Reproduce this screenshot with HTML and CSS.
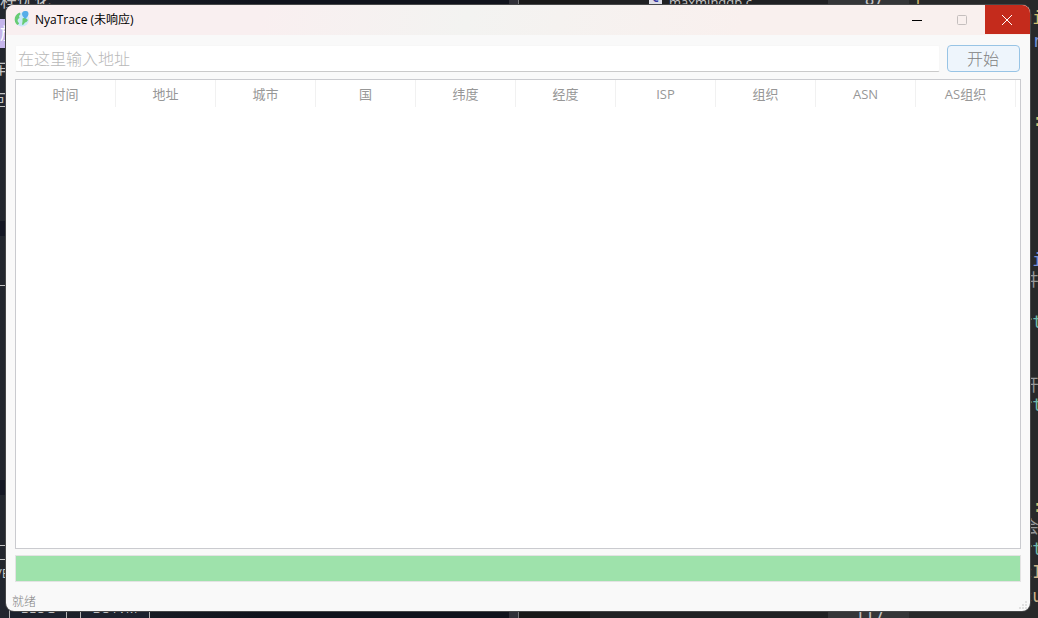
FILE: index.html
```
<!DOCTYPE html>
<html lang="zh-CN">
<head>
  <meta charset="utf-8">
  <title>NyaTrace</title>
  <link rel="stylesheet" href="styles.css">
</head>
<body>
  <!-- what lies behind the window -->
  <div class="desktop" aria-hidden="true">
    <div class="browser">
      <span class="note note-top">程优化.</span>
      <span class="note note-mark">放</span>
      <span class="note note-car">车</span>
      <span class="note note-back">回</span>
      <span class="band band-upper"></span>
      <span class="band band-lower"></span>
      <span class="rule rule-1"></span>
      <span class="rule rule-2"></span>
      <span class="rule rule-3"></span>
      <span class="note note-ve">VE</span>
      <span class="tag tag-blog">BLOG</span>
      <span class="tag tag-bot">BOTVM</span>
    </div>
    <div class="editor">
      <div class="tree">
        <span class="file-icon">C</span>
        <span class="file-name">maxminddb.c</span>
      </div>
      <div class="gutter">
        <span class="line-first">87</span>
        <span class="line-last">117</span>
      </div>
      <div class="code">
        <span class="code-top">i</span>
        <span class="frag frag-1 gold">ui</span>
        <span class="frag frag-2 blue">tr</span>
        <span class="frag frag-3 gold">::</span>
        <span class="frag frag-4 blue">:i</span>
        <span class="frag frag-5 grey">井</span>
        <span class="frag frag-6 teal">rt</span>
        <span class="frag frag-7 grey">开</span>
        <span class="frag frag-8 teal">rt</span>
        <span class="frag frag-9 gold">::</span>
        <span class="frag frag-10 grey">会</span>
        <span class="frag frag-11 teal">rt</span>
        <span class="frag frag-12 sand">cI</span>
        <span class="frag frag-13 sand">cu</span>
      </div>
    </div>
  </div>

  <div class="window">
    <header class="titlebar">
      <svg class="app-icon" width="16" height="16" viewBox="0 0 16 16">
        <circle cx="8" cy="8.500" r="7" fill="#cbe8fa"/>
        <path d="M5.500 1.500C2 3 .5 6 .7 9c.3 2.500 1.300 4 3 5l1.500-1.500-1.700-2.500.5-2 1.500-1-.5-2 1.500-2z" fill="#68cc74"/>
        <path d="M8.500 7.500l2.500-1 3 2.500-1.500 2-1.500.5-2 2.500-1-.5.500-3z" fill="#68cc74"/>
        <path d="M11.300 0a3 3 0 0 1 3.200 3c0 1.800-1.500 3-3.200 5C9.500 6 8 4.800 8 3a3.200 3.200 0 0 1 3.300-3z" fill="#57ade9"/>
      </svg>
      <h1>NyaTrace (未响应)</h1>
      <div class="caption-buttons">
        <button type="button" aria-label="最小化">
          <svg width="10" height="10" viewBox="0 0 10 10"><path d="M0 5.500h10" stroke="#000"/></svg>
        </button>
        <button type="button" aria-label="最大化" disabled>
          <svg width="10" height="10" viewBox="0 0 10 10"><rect x=".5" y=".5" width="9" height="9" rx="1" fill="none" stroke="#c5bfbe"/></svg>
        </button>
        <button type="button" class="close" aria-label="关闭">
          <svg width="10" height="10" viewBox="0 0 10 10"><path d="M0 0l10 10M10 0L0 10" stroke="#fff"/></svg>
        </button>
      </div>
    </header>

    <main>
      <form class="address-row">
        <input type="text" placeholder="在这里输入地址" aria-label="地址">
        <button type="button">开始</button>
      </form>
      <div class="results">
        <table>
          <thead>
            <tr>
              <th>时间</th>
              <th>地址</th>
              <th>城市</th>
              <th>国</th>
              <th>纬度</th>
              <th>经度</th>
              <th>ISP</th>
              <th>组织</th>
              <th>ASN</th>
              <th>AS组织</th>
            </tr>
          </thead>
        </table>
      </div>
      <progress value="100" max="100" aria-label="进度"></progress>
    </main>

    <footer class="statusbar">
      <span>就绪</span>
      <svg width="9" height="9" viewBox="0 0 9 9" fill="#e0e0e0">
        <path d="M6 0h2v2H6zM3 3h2v2H3zM6 3h2v2H6zM0 6h2v2H0zM3 6h2v2H3zM6 6h2v2H6z"/>
      </svg>
    </footer>
  </div>
</body>
</html>
```

FILE: styles.css
```
* {
  box-sizing: border-box;
}

body {
  display: flex;
  height: 100vh;
  margin: 0;
  padding: 5px 8px 7px 6px;
  overflow: hidden;
  background-color: #222426;
  font-family: "Open Sans", "Noto Sans", "Noto Sans CJK SC", sans-serif;
}

button,
input {
  font-family: inherit;
}

/* desktop */
.desktop {
  position: absolute;
  inset: 0;
  display: flex;
  overflow: hidden;
  color: #c4c4c4;
}

.browser {
  position: relative;
  width: 519px;
  border-right: 1px solid #77777a;
  background: linear-gradient(90deg, transparent 509px, #303038 509px), linear-gradient(90deg, #22262e, #10131c 50%);
}

.note {
  position: absolute;
  left: 0;
  font-size: 16px;
  line-height: 20px;
}

.note-top {
  top: -9px;
  font-size: 17px;
}

.note-mark {
  top: 19px;
  width: 12px;
  height: 29px;
  padding-top: 4px;
  background-color: #c5b5eb;
  color: #fff;
}

.note-car {
  top: 58px;
  left: -8px;
}

.note-back {
  top: 90px;
  left: -8px;
}

.note-ve {
  top: 563px;
  left: -6px;
  font-size: 13px;
}

.band {
  position: absolute;
  left: 0;
  width: 8px;
  height: 15px;
  background-color: #141724;
}

.band-upper {
  top: 221px;
}

.band-lower {
  top: 480px;
}

.rule {
  position: absolute;
  left: 0;
  width: 8px;
  height: 1px;
  background-color: #c4c4c4;
}

.rule-1 {
  top: 285px;
}

.rule-2 {
  top: 545px;
}

.rule-3 {
  top: 559px;
}

.tag {
  position: absolute;
  top: 598px;
  height: 20px;
  border: 1px solid #b4b4b4;
  border-bottom: 0;
  background-color: #1c222e;
  font-size: 13px;
  line-height: 18px;
  text-align: center;
}

.tag-blog {
  left: 9px;
  width: 58px;
}

.tag-bot {
  left: 80px;
  width: 70px;
}

.editor {
  display: flex;
  flex: 1;
  background-color: #222426;
  font-family: "DejaVu Sans Mono", "Noto Sans CJK SC", monospace;
}

.tree {
  position: relative;
  flex: 1;
  background: linear-gradient(90deg, #191919 71px, #202123 71px);
}

.file-icon {
  position: absolute;
  top: -8px;
  left: 130px;
  width: 13px;
  height: 14px;
  background-color: #dcdce6;
  color: #3434a0;
  font-size: 11px;
  font-weight: bold;
  text-align: center;
}

.file-name {
  position: absolute;
  top: -6px;
  left: 150px;
  font-family: "Open Sans", sans-serif;
  font-size: 13px;
  line-height: 16px;
}

.gutter {
  position: relative;
  width: 81px;
  background-color: #353638;
  font-size: 16px;
}

.line-first,
.line-last {
  position: absolute;
  right: 25px;
  line-height: 20px;
}

.line-first {
  top: -10px;
}

.line-last {
  top: 607px;
}

.code {
  position: relative;
  width: 129px;
  background-color: #28292a;
}

.code-top {
  position: absolute;
  top: -10px;
  left: 4px;
  color: #d6b96d;
  line-height: 20px;
}

.frag {
  position: absolute;
  left: 113px;
  font-size: 17px;
  line-height: 20px;
}

.frag-1 {
  top: 8px;
}

.frag-2 {
  top: 31px;
}

.frag-3 {
  top: 110px;
}

.frag-4 {
  top: 250px;
}

.frag-5 {
  top: 270px;
}

.frag-6 {
  top: 312px;
}

.frag-7 {
  top: 375px;
}

.frag-8 {
  top: 395px;
}

.frag-9 {
  top: 496px;
}

.frag-10 {
  top: 517px;
}

.frag-11 {
  top: 539px;
}

.frag-12 {
  top: 562px;
}

.frag-13 {
  top: 586px;
}

.blue {
  color: #7590d8;
}

.gold {
  color: #d2bf70;
}

.teal {
  color: #72b8a8;
}

.grey {
  color: #96989a;
}

.sand {
  color: #d0b58a;
}

/* window */
.window {
  position: relative;
  display: flex;
  flex: 1;
  flex-direction: column;
  overflow: hidden;
  border-radius: 8px;
  background-color: #f9f9f9;
  box-shadow: 0 0 0 1px #464748;
}

.titlebar {
  display: flex;
  align-items: center;
  height: 30px;
  padding-left: 8px;
  background: linear-gradient(100deg, #f9eff0 25%, #f3f3f1 45%, #f9f0ee 72%);
}

.titlebar h1 {
  flex: 1;
  margin: 0 0 0 5px;
  color: #000;
  font-size: 12px;
  font-weight: normal;
  line-height: 16px;
}

.app-icon {
  margin-bottom: 3px;
}

.caption-buttons {
  display: flex;
  align-self: flex-start;
}

.caption-buttons button {
  display: flex;
  align-items: center;
  justify-content: center;
  width: 45px;
  height: 29px;
  padding: 0 2px 0 0;
  border: 0;
  background: none;
}

.caption-buttons .close {
  background-color: #c42b1c;
}

main {
  display: flex;
  flex: 1;
  flex-direction: column;
  padding: 10px 9px 0;
}

.address-row {
  display: flex;
  gap: 7px;
  margin: 0 1px 7px 0;
}

.address-row input {
  flex: 1;
  min-width: 0;
  height: 27px;
  padding: 0 2px;
  border: 1px solid #f7f7f7;
  border-bottom-color: #cacaca;
  border-radius: 2px;
  background-color: #fff;
  font-size: 16px;
  font-weight: 300;
}

.address-row input::placeholder {
  color: #b8b8b8;
}

.address-row button {
  width: 73px;
  height: 27px;
  padding: 0 1px 1px 0;
  border: 1px solid #98c4e5;
  border-radius: 4px;
  background-color: #eef5fc;
  color: #808080;
  font-size: 16px;
  font-weight: 300;
}

.results {
  flex: 1;
  padding-right: 4px;
  border: 1px solid #cacbcf;
  background-color: #fff;
}

.results table {
  width: 100%;
  border-collapse: separate;
  border-spacing: 0;
  table-layout: fixed;
}

.results th {
  height: 27px;
  padding: 0;
  border-right: 1px solid #f1f1f1;
  color: #979797;
  font-size: 13px;
  font-weight: normal;
  line-height: 20px;
}

progress {
  width: 100%;
  height: 27px;
  margin-top: 6px;
  border: 1px solid #e3e3e3;
  appearance: none;
}

progress::-webkit-progress-bar {
  background-color: #e6e6e6;
}

progress::-webkit-progress-value {
  background-color: #9ee2ab;
}

.statusbar {
  display: flex;
  align-items: flex-end;
  justify-content: space-between;
  height: 29px;
  padding: 0 2px 1px 6px;
  color: #808080;
  font-size: 12px;
  font-weight: 300;
  line-height: 16px;
}
```
